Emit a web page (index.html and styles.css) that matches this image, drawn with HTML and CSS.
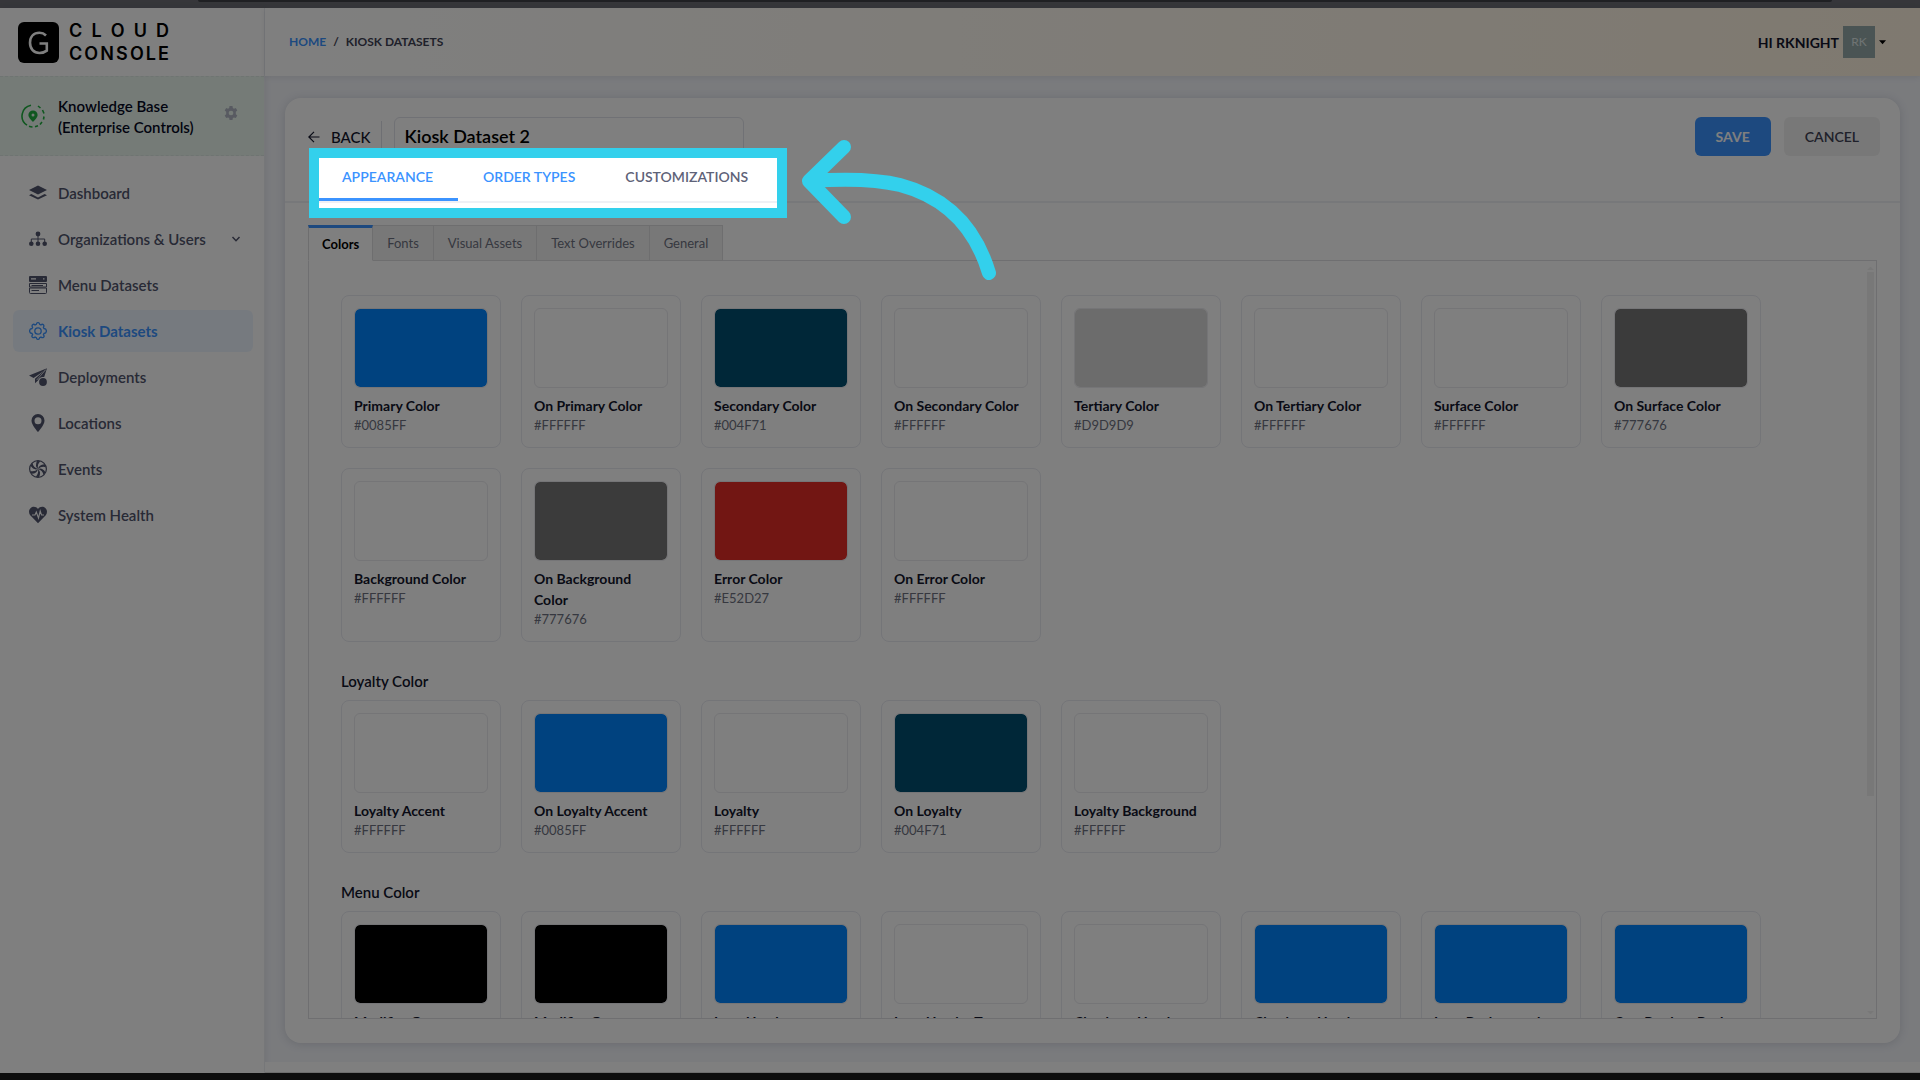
FILE: index.html
```html
<!DOCTYPE html>
<html lang="en">
<head>
    <meta charset="UTF-8">
    <title>Cloud Console - Kiosk Datasets</title>
    <link rel="stylesheet" href="styles.css">
</head>
<body>
    <div class="browser-top"></div>
    <div class="app">
        <aside class="sidebar">
            <a class="logo" href="#">
                <svg class="logo-mark" viewBox="0 0 41 41" aria-hidden="true">
                    <rect width="41" height="41" rx="6"/>
                    <path d="M28 13.5C26 11.5 24 10.8 21.5 10.8C15.5 10.8 12 15 12 20.8C12 26.8 15.7 31 21.5 31C24.5 31 27 30 28.800 28.600V21.500H21.500" fill="none" stroke="#fff" stroke-width="2.600"/>
                </svg>
                <span class="logo-text">
                    <span class="logo-cloud"><b>C</b><b>L</b><b>O</b><b>U</b><b>D</b></span>
                    <span class="logo-console"><b>C</b><b>O</b><b>N</b><b>S</b><b>O</b><b>L</b><b>E</b></span>
                </span>
            </a>
            <div class="org">
                <svg class="org-icon" viewBox="0 0 24 24" aria-hidden="true">
                    <path d="M10 1.200A11 11 0 0 0 6 21.200M8 22.300A11 11 0 0 0 11.500 23M14 22.800l3-1M19 20.500l2-2.500M22.500 15.500l.5-3M23 9.500l-1.500-3.500M19.500 4l-2.500-2" fill="none" stroke="#1fae3f" stroke-width="1.600"/>
                    <path d="M12 6.500a4.600 4.600 0 0 1 4.600 4.600c0 3-4.600 6.900-4.600 6.900s-4.600-3.900-4.600-6.900A4.600 4.600 0 0 1 12 6.500z" fill="#1fae3f"/>
                    <circle cx="12" cy="11" r="1.500" fill="#e9f6ec"/>
                </svg>
                <div class="org-name">Knowledge Base (Enterprise Controls)</div>
                <button class="org-settings" type="button" aria-label="Settings">
                    <svg viewBox="0 0 16 16"><path fill-rule="evenodd" d="M6.300 0h3.400l.4 2.200 1.300.8 2.100-.8 1.700 2.900L13.500 6.500v3l1.700 1.400-1.700 2.900-2.100-.8-1.300.8L9.700 16H6.300l-.4-2.200-1.300-.8-2.100.8L.8 10.900 2.500 9.500v-3L.8 5.100l1.700-2.900 2.100.8 1.300-.8zM8 5.300a2.700 2.700 0 1 0 0 5.400 2.700 2.700 0 0 0 0-5.400z"/></svg>
                </button>
            </div>
            <nav class="menu">
                <a href="#">
                    <svg viewBox="0 0 18 18"><path d="M9 1.500l9 4.500-9 4.600L0 6z"/><path d="M2.400 8.500L0 9.800 9 14l9-4.200-2.400-1.300L9 12z" transform="translate(0 1.500)"/></svg>
                    <span>Dashboard</span>
                </a>
                <a href="#">
                    <svg viewBox="0 0 18 18"><circle cx="9" cy="4" r="2.400"/><circle cx="2.300" cy="13.700" r="2.300"/><circle cx="9" cy="13.700" r="2.300"/><circle cx="15.700" cy="13.700" r="2.300"/><path d="M9 5v8M2.300 13V9h13.400v4" fill="none" stroke="currentColor"/></svg>
                    <span>Organizations &amp; Users</span>
                    <svg class="chevron" viewBox="0 0 10 10"><path d="M1.500 3L5 6.700 8.500 3" fill="none" stroke="currentColor" stroke-width="1.500"/></svg>
                </a>
                <a href="#">
                    <svg viewBox="0 0 18 18"><path fill-rule="evenodd" d="M1 0h16a1 1 0 0 1 1 1v4a1 1 0 0 1-1 1H1a1 1 0 0 1-1-1V1a1 1 0 0 1 1-1zM2 2.300v1.200h5V2.300zM14 2.300v1.200h1.500V2.300z"/><path d="M.5 7.500h17V11H.5zM.5 12h17v4.500a1 1 0 0 1-1 1h-15a1 1 0 0 1-1-1zM2.500 9.500H14M2.500 14.500H10" fill="none" stroke="currentColor"/></svg>
                    <span>Menu Datasets</span>
                </a>
                <a class="active" href="#">
                    <svg viewBox="0 0 18 18"><path d="M7.300 2.400Q7.500.6 9 .6t1.700 1.800l1.200.5q1.500-1.200 2.500-.1t0 2.500l.6 1.200q2.400.1 2.400 2.500t-2.400 2.500l-.6 1.200q1.300 1.500.2 2.500t-2.700-.1l-1.200.5Q10.500 17.400 9 17.400t-1.700-1.800l-1.200-.5q-1.600 1.100-2.700.1t.2-2.500L3 11.500Q.6 11.400.6 9T3 6.500l.6-1.200Q2.500 3.900 3.600 2.800t2.500.1z" fill="none" stroke="currentColor" stroke-width="1.300"/><circle cx="9" cy="9" r="3.200" fill="none" stroke="currentColor" stroke-width="1.300"/></svg>
                    <span>Kiosk Datasets</span>
                </a>
                <a href="#">
                    <svg viewBox="0 0 18 18"><path d="M18 .3L0 7.500l4.600 2.400L14.800 3z"/><path d="M18 .3L6 10.700v4.600L9 12.500c.8-2 2.600-3.400 5-3.400h1.200z"/><path d="M16.500 2L7.700 12" stroke="#fff" stroke-width=".7"/><circle cx="14" cy="14" r="3.900"/></svg>
                    <span>Deployments</span>
                </a>
                <a href="#">
                    <svg viewBox="0 0 18 18"><path fill-rule="evenodd" d="M9 0a6.500 6.500 0 0 1 6.500 6.700C15.500 11 9 18 9 18S2.500 11 2.500 6.700A6.500 6.500 0 0 1 9 0zm0 3.200a3.500 3.500 0 1 0 0 7 3.500 3.500 0 0 0 0-7z"/></svg>
                    <span>Locations</span>
                </a>
                <a href="#">
                    <svg viewBox="0 0 18 18"><circle cx="9" cy="9" r="8.400" fill="none" stroke="currentColor" stroke-width="1.200"/><g id="blade"><path d="M9 9Q5.500 6 8 1l3.500.2Q8 4 9 9z"/></g><use href="#blade" transform="rotate(60 9 9)"/><use href="#blade" transform="rotate(120 9 9)"/><use href="#blade" transform="rotate(180 9 9)"/><use href="#blade" transform="rotate(240 9 9)"/><use href="#blade" transform="rotate(300 9 9)"/></svg>
                    <span>Events</span>
                </a>
                <a href="#">
                    <svg viewBox="0 0 18 18"><path d="M9 3C7.300.2 3.600 0 1.700 1.900-.4 4-.4 7 1 9l8 8.300L17 9c1.400-2 1.400-5-.7-7.100C14.400 0 10.700.2 9 3z"/><path d="M3 9h3l1.300-3 2.200 6 1.700-7 1.300 4H15" fill="none" stroke="#fff" stroke-width="1.100"/></svg>
                    <span>System Health</span>
                </a>
            </nav>
        </aside>

        <div class="main">
            <header class="topbar">
                <div class="breadcrumb"><a href="#">Home</a><span>/</span><span>Kiosk Datasets</span></div>
                <button class="user" type="button">
                    <span>HI RKNIGHT</span>
                    <span class="avatar">RK</span>
                    <svg viewBox="0 0 8 5"><path d="M0 0h8L4 4.500z"/></svg>
                </button>
            </header>

            <main class="card">
                <div class="card-head">
                    <div class="title-row">
                        <a class="back" href="#">
                            <svg viewBox="0 0 12 12"><path d="M6 .8L.8 6 6 11.200M.8 6H11.500" fill="none" stroke="currentColor" stroke-width="1.200"/></svg>
                            BACK
                        </a>
                        <input class="dataset-name" type="text" value="Kiosk Dataset 2" aria-label="Dataset name">
                        <div class="actions">
                            <button class="btn btn-save" type="button">SAVE</button>
                            <button class="btn btn-cancel" type="button">CANCEL</button>
                        </div>
                    </div>
                    <div class="main-tabs">
                        <a class="selected" href="#">APPEARANCE</a>
                        <a href="#">ORDER TYPES</a>
                        <a class="muted" href="#">CUSTOMIZATIONS</a>
                    </div>
                    <div class="spotlight"></div>
                    <svg class="arrow" viewBox="0 0 196 144" aria-hidden="true">
                        <path d="M42 8L7 42l35 36M7 42Q66 38 98 46Q166 64 187 134"/>
                    </svg>
                </div>

                <div class="card-body">
                    <div class="sub-tabs">
                        <button class="selected" type="button">Colors</button>
                        <button type="button">Fonts</button>
                        <button type="button">Visual Assets</button>
                        <button type="button">Text Overrides</button>
                        <button type="button">General</button>
                    </div>
                    <div class="panel">
                        <div class="colors" id="themeColors"></div>
                        <h2>Loyalty Color</h2>
                        <div class="colors" id="loyaltyColors"></div>
                        <h2>Menu Color</h2>
                        <div class="colors" id="menuColors"></div>
                        <div class="scrollbar"><i class="up"></i><i class="thumb"></i><i class="down"></i></div>
                    </div>
                </div>
            </main>
            <footer class="footer"></footer>
        </div>
    </div>
    <div class="browser-bottom"></div>
    <script src="script.js"></script>
</body>
</html>
```

FILE: styles.css
```css
* {
    box-sizing: border-box;
}
body {
    margin: 0;
    height: 100vh;
    display: flex;
    flex-direction: column;
    overflow: hidden;
    font-family: Lato, "Liberation Sans", sans-serif;
    font-size: 14px;
    color: #12152b;
    background-color: #f4f6fb;
}
a {
    color: inherit;
    text-decoration: none;
}
button, input {
    font-family: inherit;
    color: inherit;
}
button {
    cursor: pointer;
}

/* browser window edges */
.browser-top {
    flex: none;
    height: 8px;
    padding: 0 88px 0 198px;
    background-color: #6c6d74;
}
.browser-top::before {
    content: "";
    display: block;
    height: 2px;
    background-color: #3e4046;
    border-radius: 0 0 8px 8px;
}
.browser-bottom {
    flex: none;
    height: 7px;
    background-color: #1c1c1c;
}
.app {
    flex: 1;
    min-height: 0;
    display: flex;
}

/* sidebar */
.sidebar {
    flex: none;
    width: 265px;
    background-color: #fff;
    border-right: 1px solid #eceef3;
    box-shadow: 0 0 6px rgba(40, 44, 70, 0.1);
}
.logo {
    display: flex;
    align-items: center;
    gap: 10px;
    height: 68px;
    padding-left: 18px;
    color: #000;
}
.logo-mark {
    width: 41px;
    height: 41px;
}
.logo-text {
    display: flex;
    flex-direction: column;
    width: 100px;
    font-family: Inter, sans-serif;
    font-size: 18px;
    line-height: 23px;
}
.logo-text span {
    display: flex;
    justify-content: space-between;
}
.logo-text b {
    font-weight: 600;
}
.org {
    display: flex;
    align-items: flex-start;
    height: 80px;
    padding: 19px 26px 0 21px;
    background-color: #eaf7ee;
    border-top: 1px dashed #dfe9e4;
    border-bottom: 1px dashed #dfe9e4;
}
.org-icon {
    width: 24px;
    height: 24px;
    margin: 8px 13px 0 0;
}
.org-name {
    flex: 1;
    font-size: 15px;
    font-weight: 600;
    line-height: 21px;
    padding-right: 20px;
    color: #05081f;
}
.org-settings {
    width: 14px;
    height: 15px;
    margin-top: 9px;
    padding: 0;
    border: none;
    background: none;
    fill: #b0b5c2;
}
.org-settings svg {
    display: block;
}
.menu {
    display: flex;
    flex-direction: column;
    gap: 4px;
    padding: 16px 11px 0 13px;
}
.menu a {
    display: flex;
    align-items: center;
    gap: 11px;
    height: 42px;
    padding: 0 12px 0 16px;
    border-radius: 6px;
    font-size: 15px;
    font-weight: 600;
    color: #50546c;
}
.menu svg {
    width: 18px;
    height: 18px;
    fill: currentColor;
}
.menu .chevron {
    width: 10px;
    height: 10px;
    margin-left: auto;
}
.menu .active {
    font-weight: 700;
    color: #3b93ff;
    background-color: #edf5ff;
}

/* top bar */
.main {
    flex: 1;
    min-width: 0;
    display: flex;
    flex-direction: column;
}
.topbar {
    flex: none;
    display: flex;
    justify-content: space-between;
    align-items: center;
    height: 68px;
    padding: 0 34px 0 24px;
    background: linear-gradient(90deg, #fff, #fff3e0);
    box-shadow: 0 1px 6px rgba(40, 44, 70, 0.1);
}
.breadcrumb {
    display: flex;
    gap: 7px;
    padding-bottom: 2px;
    font-size: 12px;
    font-weight: 700;
    text-transform: uppercase;
    color: #3f4254;
}
.breadcrumb a {
    color: #3b93ff;
}
.user {
    display: flex;
    align-items: center;
    gap: 4px;
    padding: 0;
    border: none;
    background: none;
    font-size: 14px;
    font-weight: 700;
}
.avatar {
    width: 32px;
    height: 32px;
    line-height: 32px;
    font-size: 12px;
    font-weight: 400;
    color: #dfe6e6;
    background-color: #95a9a8;
}
.user svg {
    width: 7px;
    height: 5px;
}

/* dataset card */
.card {
    flex: 1;
    min-height: 0;
    display: flex;
    flex-direction: column;
    margin: 22px 20px 19px;
    background-color: #fff;
    border-radius: 16px;
    box-shadow: 0 1px 10px rgba(40, 44, 70, 0.16);
}
.card-head {
    flex: none;
    position: relative;
    padding: 19px 20px 0 23px;
    border-bottom: 2px solid #eff0f5;
}
.title-row {
    display: flex;
    height: 40px;
}
.back {
    display: flex;
    align-items: center;
    gap: 11px;
    height: 32px;
    margin: 4px 12px 0 0;
    padding-right: 10px;
    border-right: 1px solid #dcdee6;
    font-size: 15px;
    font-weight: 500;
}
.back svg {
    width: 12px;
    height: 12px;
}
.dataset-name {
    width: 350px;
    height: 38px;
    padding: 0 10px;
    border: 1px solid #e0e2ea;
    border-radius: 6px;
    background-color: #fff;
    font-size: 18px;
    font-weight: 600;
    color: #000;
}
.actions {
    display: flex;
    gap: 13px;
    margin-left: auto;
}
.btn {
    height: 39px;
    padding: 0 21px;
    border: none;
    border-radius: 6px;
    font-size: 14px;
}
.btn-save {
    color: #fff;
    font-weight: 700;
    background-color: #3b93ff;
}
.btn-cancel {
    color: #3f4254;
    font-weight: 600;
    background-color: #f1f1f1;
}
.main-tabs {
    display: flex;
    height: 44px;
    padding-left: 1px;
}
.main-tabs a {
    padding: 11px 25px 0;
    font-size: 14px;
    line-height: 18px;
    font-weight: 600;
    color: #3b93ff;
}
.main-tabs a:first-child {
    padding-left: 33px;
}
.main-tabs .selected {
    border-bottom: 3px solid #3b93ff;
}
.main-tabs .muted {
    color: #5e6278;
}

/* tutorial highlight: dims everything outside the box */
.spotlight {
    position: absolute;
    top: 50px;
    left: 24px;
    width: 478px;
    height: 70px;
    border: 10px solid #33d0ec;
    box-shadow: 0 0 0 2000px rgba(0, 0, 0, 0.5);
    z-index: 10;
    pointer-events: none;
}
.arrow {
    position: absolute;
    top: 41px;
    left: 517px;
    width: 196px;
    height: 144px;
    z-index: 11;
    fill: none;
    stroke: #33d0ec;
    stroke-width: 14;
    stroke-linecap: round;
    stroke-linejoin: round;
    pointer-events: none;
}

/* colors */
.card-body {
    flex: 1;
    min-height: 0;
    display: flex;
    flex-direction: column;
    padding: 22px 23px 24px;
}
.sub-tabs {
    display: flex;
    margin-bottom: -1px;
    z-index: 1;
}
.sub-tabs button {
    height: 36px;
    padding: 0 14px;
    border: 1px solid #dcdcdf;
    border-left: none;
    background-color: #f1f1f1;
    font-size: 13px;
    color: #6d7080;
}
.sub-tabs .selected {
    padding: 0 13px;
    border-left: 1px solid #dcdcdf;
    border-top: 3px solid #3b93ff;
    border-bottom-color: #fff;
    background-color: #fff;
    font-weight: 700;
    color: #000;
}
.panel {
    flex: 1;
    min-height: 0;
    position: relative;
    overflow: hidden;
    padding: 34px 32px 0;
    border: 1px solid #dfdfe3;
}
.colors {
    display: grid;
    grid-template-columns: repeat(auto-fill, 160px);
    gap: 20px;
}
.color {
    padding: 12px 12px 13px;
    border: 1px solid #e9eaf1;
    border-radius: 8px;
}
.swatch {
    height: 80px;
    margin-bottom: 7px;
    border: 1px solid #eaeaee;
    border-radius: 6px;
}
.color-name {
    font-weight: 700;
    line-height: 21px;
}
.color-value {
    font-size: 13px;
    line-height: 18px;
    color: #6d7080;
}
h2 {
    margin: 28px 0 8px;
    font-size: 15px;
    font-weight: 600;
    line-height: 22px;
}
.scrollbar {
    position: absolute;
    top: 6px;
    right: 2px;
    bottom: 4px;
    width: 7px;
    display: flex;
    flex-direction: column;
    gap: 2px;
}
.thumb {
    flex: 0 1 524px;
    background-color: #f1f1f1;
}
.up, .down {
    border: 3px solid transparent;
}
.up {
    border-top: none;
    border-bottom-color: #f1f1f1;
}
.down {
    margin-top: auto;
    border-bottom: none;
    border-top-color: #f1f1f1;
}
.footer {
    flex: none;
    height: 11px;
    background-color: #fff;
    border-bottom: 1px solid #dcdcdc;
}
```

FILE: script.js
```js
const themeColors = [
    ['Primary Color', '#0085FF'],
    ['On Primary Color', '#FFFFFF'],
    ['Secondary Color', '#004F71'],
    ['On Secondary Color', '#FFFFFF'],
    ['Tertiary Color', '#D9D9D9'],
    ['On Tertiary Color', '#FFFFFF'],
    ['Surface Color', '#FFFFFF'],
    ['On Surface Color', '#777676'],
    ['Background Color', '#FFFFFF'],
    ['On Background Color', '#777676'],
    ['Error Color', '#E52D27'],
    ['On Error Color', '#FFFFFF']
];

const loyaltyColors = [
    ['Loyalty Accent', '#FFFFFF'],
    ['On Loyalty Accent', '#0085FF'],
    ['Loyalty', '#FFFFFF'],
    ['On Loyalty', '#004F71'],
    ['Loyalty Background', '#FFFFFF']
];

const menuColors = [
    ['Modifier Group', '#000000'],
    ['Modifier Group', '#000000'],
    ['Item Header', '#0085FF'],
    ['Item Header Text', '#FFFFFF'],
    ['Checkout Header', '#FFFFFF'],
    ['Checkout Header', '#0085FF'],
    ['Item Background', '#0085FF'],
    ['Cart Product Back', '#0085FF']
];

function renderColors(id, colors) {
    const grid = document.getElementById(id);
    colors.forEach(([name, value]) => {
        const color = document.createElement('div');
        color.className = 'color';
        color.innerHTML = `
            <div class="swatch" style="background: ${value} padding-box"></div>
            <div class="color-name">${name}</div>
            <div class="color-value">${value}</div>`;
        grid.appendChild(color);
    });
}

renderColors('themeColors', themeColors);
renderColors('loyaltyColors', loyaltyColors);
renderColors('menuColors', menuColors);
```
